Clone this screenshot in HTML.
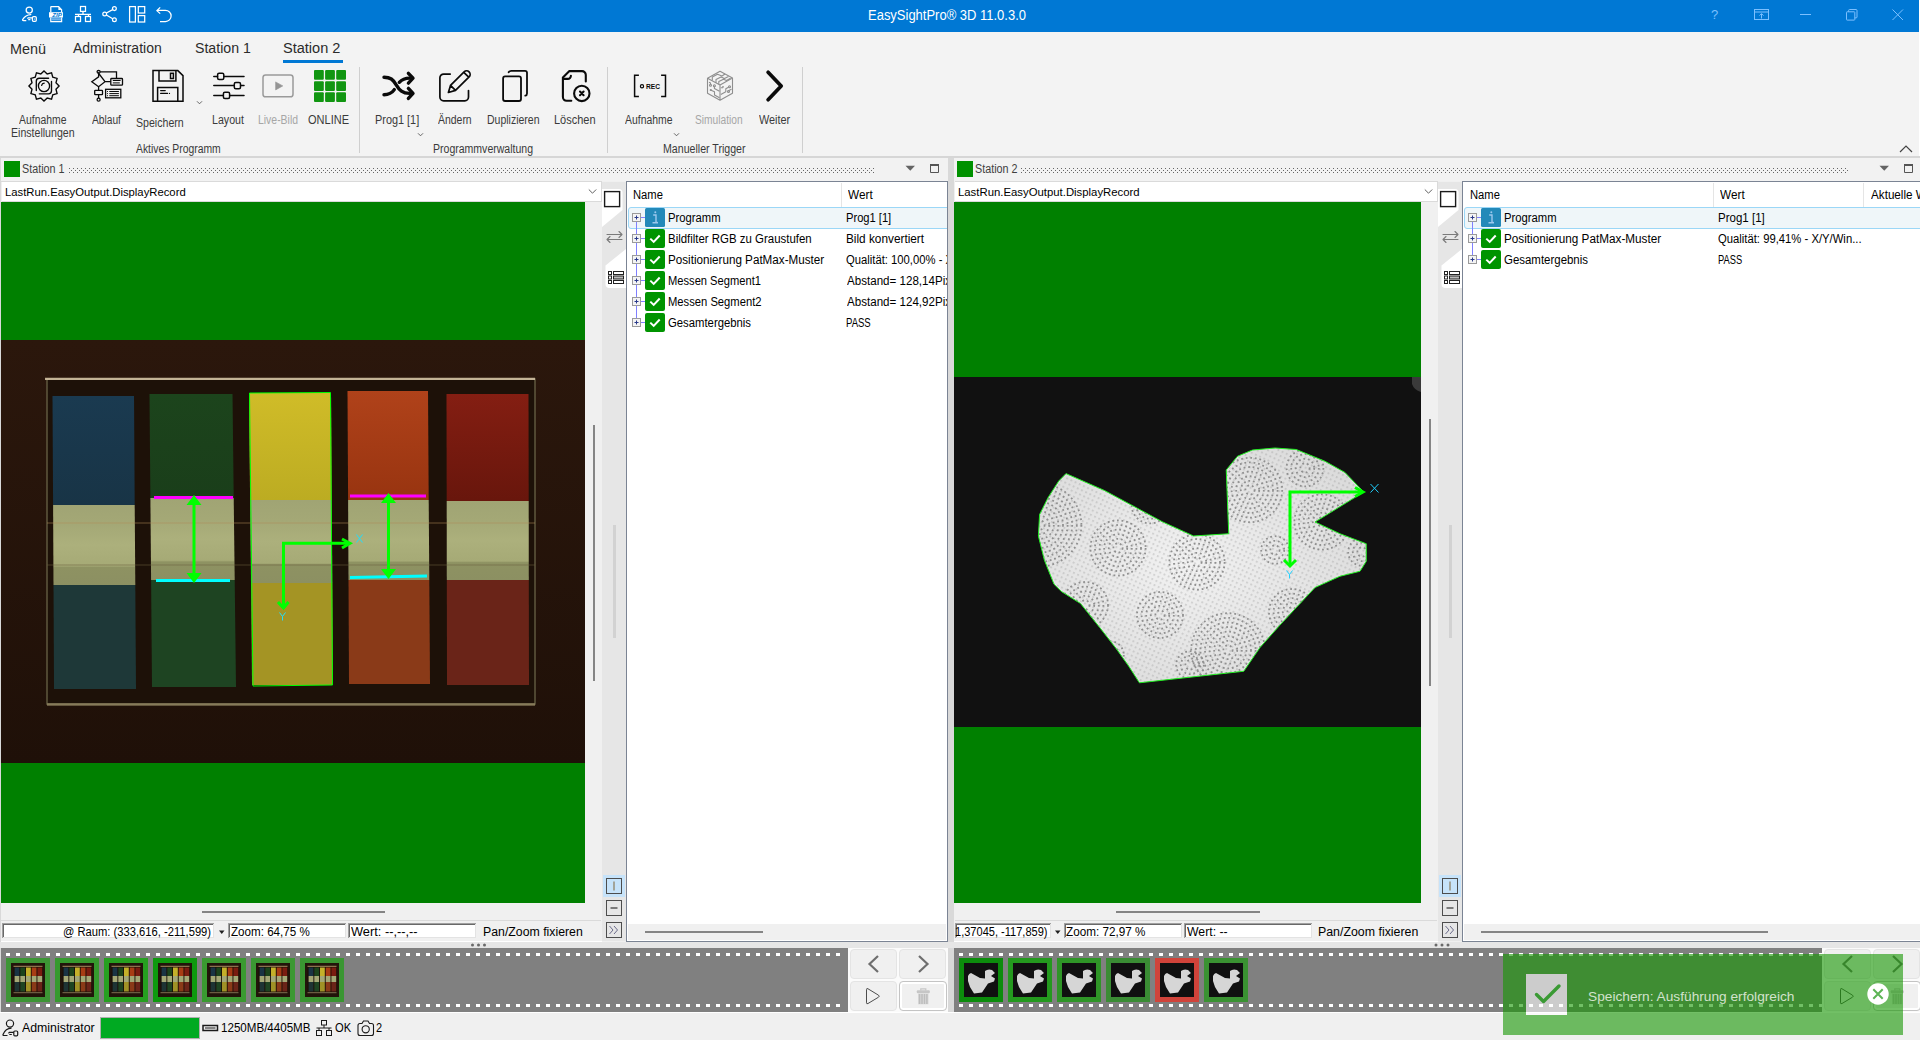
<!DOCTYPE html>
<html><head><meta charset="utf-8"><title>EasySightPro 3D</title>
<style>
html,body{margin:0;padding:0;width:1920px;height:1040px;overflow:hidden;background:#f0f0f0;font-family:"Liberation Sans",sans-serif;}
.a{position:absolute;display:block;}
.t{position:absolute;white-space:pre;transform-origin:0 0;font-family:"Liberation Sans",sans-serif;}
</style></head><body>
<div class="a" style="left:0px;top:0px;width:1920px;height:32px;background:#0078d4;"></div>
<svg class="a" style="left:18px;top:2px;" width="48" height="24" viewBox="0 0 48 24"><circle cx="11.25" cy="8.1" r="3.1" fill="none" stroke="#ffffff" stroke-width="1.25"/><path d="M12.8,12.6 Q7.6,12.8 4.6,17.7 Q4.4,18.7 5.5,18.7 H7.8" fill="none" stroke="#ffffff" stroke-width="1.25" stroke-linecap="round"/><path d="M9.4,16.6 L10.2,15.8 H14.4 M10.2,17.6 H12.4" fill="none" stroke="#ffffff" stroke-width="1.25"/><rect x="14.4" y="14.6" width="3.9" height="4.7" rx="1.1" fill="none" stroke="#ffffff" stroke-width="1.25"/><circle cx="16.4" cy="17" r="0.6" fill="#ffffff"/></svg>
<svg class="a" style="left:18px;top:2px;" width="48" height="24" viewBox="0 0 48 24"><path d="M32.8,10.3 V5 Q32.8,4.6 33.3,4.6 H40.6 L43.6,7.8 V10.3 M32.8,15.4 V19.5 H43.6 V15.4" fill="none" stroke="#ffffff" stroke-width="1.25"/><path d="M40.4,4.8 V8.1 H43.4 Z" fill="#ffffff"/><rect x="31" y="10.2" width="14" height="5.3" fill="#ffffff"/><rect x="33.2" y="16.2" width="10" height="2.2" fill="#6fb1ea"/><text x="34.2" y="14.9" font-family="Liberation Sans" font-weight="bold" font-style="italic" font-size="5.6" fill="#0078d4" textLength="9.6" lengthAdjust="spacingAndGlyphs">ZIP</text></svg>
<svg class="a" style="left:70px;top:2px;" width="48" height="24" viewBox="0 0 48 24"><rect x="10.5" y="4.5" width="5" height="4.9" fill="none" stroke="#ffffff" stroke-width="1.25"/><path d="M13,9.4 V12.4 M5,12.4 H21 M8.5,12.4 V14 M18.5,12.4 V14" fill="none" stroke="#ffffff" stroke-width="1.25"/><rect x="5.5" y="14.5" width="5" height="5" fill="none" stroke="#ffffff" stroke-width="1.25"/><rect x="15.5" y="14.5" width="5" height="5" fill="none" stroke="#ffffff" stroke-width="1.25"/><circle cx="44.4" cy="6.6" r="1.9" fill="none" stroke="#ffffff" stroke-width="1.25"/><circle cx="34.7" cy="12" r="1.9" fill="none" stroke="#ffffff" stroke-width="1.25"/><circle cx="44.4" cy="17.8" r="1.9" fill="none" stroke="#ffffff" stroke-width="1.25"/><path d="M36.4,11 L42.7,7.6 M36.4,13 L42.7,16.8" fill="none" stroke="#ffffff" stroke-width="1.25"/></svg>
<svg class="a" style="left:125px;top:2px;" width="48" height="24" viewBox="0 0 48 24"><rect x="4.6" y="4.6" width="5.8" height="15.4" fill="none" stroke="#ffffff" stroke-width="1.25" stroke-width="1.3"/><rect x="13.3" y="4.6" width="6.4" height="6.4" fill="none" stroke="#ffffff" stroke-width="1.25" stroke-width="1.3"/><rect x="13.3" y="13.6" width="6.4" height="6.4" fill="none" stroke="#ffffff" stroke-width="1.25" stroke-width="1.3"/><path d="M35,19.5 H40.5 A5.6,5.6 0 0 0 40.5,8.3 H32.5 M35.2,5.4 L31.8,8.6 L35.2,11.6" fill="none" stroke="#ffffff" stroke-width="1.25" stroke-width="1.3" stroke-linejoin="round"/></svg>
<svg class="a" style="left:1711px;top:8px;" width="12" height="14" viewBox="0 0 12 14"><text x="0" y="11" font-family="Liberation Sans" font-size="13" fill="#7cc0ff">?</text></svg>
<svg class="a" style="left:1754px;top:9px;" width="16" height="12" viewBox="0 0 16 12"><rect x="0.5" y="0.5" width="14" height="10" fill="none" stroke="#7cc0ff" stroke-width="1"/><path d="M0.5,3 H14.5 M7.5,9.5 V4.8 M5.5,6.6 L7.5,4.6 L9.5,6.6" fill="none" stroke="#7cc0ff" stroke-width="1"/></svg>
<svg class="a" style="left:1800px;top:14px;" width="12" height="2" viewBox="0 0 12 2"><path d="M0,0.5 H11" stroke="#7cc0ff" stroke-width="1"/></svg>
<svg class="a" style="left:1846px;top:9px;" width="12" height="12" viewBox="0 0 12 12"><rect x="0.5" y="2.8" width="8.3" height="8.3" rx="0.6" fill="none" stroke="#7cc0ff" stroke-width="1"/><path d="M2.6,2.8 V1.6 Q2.6,0.5 3.6,0.5 H10 Q11,0.5 11,1.5 V8 Q11,8.9 10,8.9 H8.8" fill="none" stroke="#7cc0ff" stroke-width="1"/></svg>
<svg class="a" style="left:1892px;top:9px;" width="12" height="12" viewBox="0 0 12 12"><path d="M0.5,0.5 L11,11 M11,0.5 L0.5,11" stroke="#7cc0ff" stroke-width="1"/></svg>
<div class="t" style="left:868.46px;top:8.33px;font-size:14px;line-height:15.638px;color:#ffffff;transform:scaleX(0.9273);">EasySightPro® 3D 11.0.3.0</div>
<div class="a" style="left:0px;top:32px;width:1920px;height:124px;background:#f3f3f3;"></div>
<div class="a" style="left:1919px;top:0px;width:1px;height:156px;background:#ffffff;"></div>
<div class="a" style="left:0px;top:156px;width:1920px;height:2px;background:#d6d6d6;"></div>
<div class="t" style="left:10.35px;top:41.83px;font-size:14px;line-height:15.638px;color:#2b2b2b;transform:scaleX(1.0291);">Menü</div>
<div class="t" style="left:73.00px;top:41.33px;font-size:14px;line-height:15.638px;color:#2b2b2b;">Administration</div>
<div class="t" style="left:194.86px;top:41.33px;font-size:14px;line-height:15.638px;color:#2b2b2b;transform:scaleX(1.0098);">Station 1</div>
<div class="t" style="left:283.35px;top:41.33px;font-size:14px;line-height:15.638px;color:#2b2b2b;transform:scaleX(1.0390);">Station 2</div>
<div class="a" style="left:283px;top:60px;width:60px;height:3px;background:#0078d4;"></div>
<div class="t" style="left:19.00px;top:114.14px;font-size:12px;line-height:13.404px;color:#3a3a3a;transform:scaleX(0.8675);">Aufnahme</div>
<div class="t" style="left:11.15px;top:127.14px;font-size:12px;line-height:13.404px;color:#3a3a3a;transform:scaleX(0.8817);">Einstellungen</div>
<div class="t" style="left:92.00px;top:114.14px;font-size:12px;line-height:13.404px;color:#3a3a3a;transform:scaleX(0.8509);">Ablauf</div>
<div class="t" style="left:136.02px;top:117.14px;font-size:12px;line-height:13.404px;color:#3a3a3a;transform:scaleX(0.8827);">Speichern</div>
<div class="t" style="left:212.15px;top:114.14px;font-size:12px;line-height:13.404px;color:#3a3a3a;transform:scaleX(0.8862);">Layout</div>
<div class="t" style="left:257.67px;top:114.14px;font-size:12px;line-height:13.404px;color:#a6a6a6;transform:scaleX(0.8695);">Live-Bild</div>
<div class="t" style="left:308.00px;top:114.14px;font-size:12px;line-height:13.404px;color:#3a3a3a;transform:scaleX(0.9170);">ONLINE</div>
<div class="t" style="left:375.13px;top:114.14px;font-size:12px;line-height:13.404px;color:#3a3a3a;transform:scaleX(0.9070);">Prog1 [1]</div>
<div class="t" style="left:438.00px;top:114.14px;font-size:12px;line-height:13.404px;color:#3a3a3a;transform:scaleX(0.8703);">Ändern</div>
<div class="t" style="left:487.16px;top:114.14px;font-size:12px;line-height:13.404px;color:#3a3a3a;transform:scaleX(0.8754);">Duplizieren</div>
<div class="t" style="left:554.12px;top:114.14px;font-size:12px;line-height:13.404px;color:#3a3a3a;transform:scaleX(0.9170);">Löschen</div>
<div class="t" style="left:625.00px;top:114.14px;font-size:12px;line-height:13.404px;color:#3a3a3a;transform:scaleX(0.8675);">Aufnahme</div>
<div class="t" style="left:695.04px;top:114.14px;font-size:12px;line-height:13.404px;color:#a6a6a6;transform:scaleX(0.8498);">Simulation</div>
<div class="t" style="left:758.95px;top:114.14px;font-size:12px;line-height:13.404px;color:#3a3a3a;transform:scaleX(0.9064);">Weiter</div>
<div class="t" style="left:136.00px;top:142.64px;font-size:12px;line-height:13.404px;color:#3a3a3a;transform:scaleX(0.8637);">Aktives Programm</div>
<div class="t" style="left:433.16px;top:142.64px;font-size:12px;line-height:13.404px;color:#3a3a3a;transform:scaleX(0.8770);">Programmverwaltung</div>
<div class="t" style="left:663.15px;top:142.64px;font-size:12px;line-height:13.404px;color:#3a3a3a;transform:scaleX(0.8838);">Manueller Trigger</div>
<svg class="a" style="left:24px;top:66px;" width="40" height="40" viewBox="0 0 40 40"><polygon points="20.00,4.90 23.21,8.02 27.55,6.92 28.77,11.23 33.08,12.45 31.98,16.79 35.10,20.00 31.98,23.21 33.08,27.55 28.77,28.77 27.55,33.08 23.21,31.98 20.00,35.10 16.79,31.98 12.45,33.08 11.23,28.77 6.92,27.55 8.02,23.21 4.90,20.00 8.02,16.79 6.92,12.45 11.23,11.23 12.45,6.92 16.79,8.02" fill="none" stroke="#0a0a0a" stroke-width="1.35" stroke-linejoin="miter"/><path d="M24.6,12.2 H15.3 A3,3 0 0 0 12.3,15.2 V24.6 M27.5,15.4 V24.8 A3,3 0 0 1 24.5,27.8 H15.3" fill="none" stroke="#0a0a0a" stroke-width="1.35" stroke-linecap="round"/><circle cx="20" cy="20" r="5.6" fill="none" stroke="#0a0a0a" stroke-width="1.35"/><path d="M17.6,19.5 A3,3 0 0 1 20.2,17.2" fill="none" stroke="#0a0a0a" stroke-width="1.2" stroke-linecap="round"/></svg>
<svg class="a" style="left:88px;top:66px;" width="40" height="40" viewBox="0 0 40 40"><circle cx="10.6" cy="5.8" r="1.5" fill="none" stroke="#0a0a0a" stroke-width="1.3"/><path d="M12.1,5.8 H28.5 V12.5 M10.6,7.3 V10.8 L3.8,15.7 L10.6,20.7 L17,15.7 Z M17,15.7 H22.8 M10.6,20.7 V24.3 M10.6,28.6 V32.2" fill="none" stroke="#0a0a0a" stroke-width="1.3"/><rect x="22.8" y="12.5" width="11.7" height="6.7" rx="0.8" fill="none" stroke="#0a0a0a" stroke-width="1.3"/><path d="M24.8,14.5 H32.6 M24.8,16.9 H31.8" fill="none" stroke="#0a0a0a" stroke-width="1"/><rect x="6.7" y="24.3" width="7.8" height="4.3" rx="0.6" fill="none" stroke="#0a0a0a" stroke-width="1.3"/><circle cx="10.6" cy="33.7" r="1.5" fill="none" stroke="#0a0a0a" stroke-width="1.3"/><rect x="17.6" y="23.3" width="15.2" height="8.5" fill="none" stroke="#0a0a0a" stroke-width="1.3"/><path d="M21.3,25.5 H30.9 M21.3,27.6 H30.9 M21.3,29.7 H30.9" fill="none" stroke="#0a0a0a" stroke-width="1"/><path d="M19.1,25.5 h0.9 M19.1,27.6 h0.9 M19.1,29.7 h0.9" fill="none" stroke="#0a0a0a" stroke-width="1"/></svg>
<svg class="a" style="left:148px;top:66px;" width="40" height="40" viewBox="0 0 40 40"><path d="M5,4.6 H29.8 L35,9.6 V35.2 H5 Z" fill="none" stroke="#0a0a0a" stroke-width="1.5" stroke-linejoin="miter"/><path d="M11,4.6 V15 H27.9 V4.6" fill="none" stroke="#0a0a0a" stroke-width="1.5"/><rect x="22.5" y="7.3" width="2.9" height="5.2" fill="none" stroke="#0a0a0a" stroke-width="1.5" stroke-width="1.3"/><path d="M9.6,35.2 V21.5 H29.8 V35.2" fill="none" stroke="#0a0a0a" stroke-width="1.5"/><path d="M12.6,24.6 H17.3 M12.6,27.4 H19.6" fill="none" stroke="#0a0a0a" stroke-width="1.1" stroke-linecap="round"/><circle cx="21.5" cy="27.4" r="0.6" fill="#0a0a0a"/></svg>
<svg class="a" style="left:208px;top:66px;" width="40" height="40" viewBox="0 0 40 40"><path d="M5.8,10.4 H9.5 M16,10.4 H36 M5.8,19.6 H26.2 M32.6,19.6 H36 M5.8,29.4 H15.3 M21.7,29.4 H36" fill="none" stroke="#0a0a0a" stroke-width="1.5" stroke-linecap="round"/><rect x="9.6" y="7.300000000000001" width="6.2" height="6.2" rx="1.5" fill="none" stroke="#0a0a0a" stroke-width="1.5"/><rect x="26.299999999999997" y="16.5" width="6.2" height="6.2" rx="1.5" fill="none" stroke="#0a0a0a" stroke-width="1.5"/><rect x="15.4" y="26.299999999999997" width="6.2" height="6.2" rx="1.5" fill="none" stroke="#0a0a0a" stroke-width="1.5"/></svg>
<svg class="a" style="left:258px;top:66px;" width="40" height="40" viewBox="0 0 40 40"><rect x="5" y="9" width="30" height="21.8" rx="2.6" fill="none" stroke="#9a9a9a" stroke-width="1.5"/><path d="M17.6,15.9 L24.8,19.9 L17.6,23.9 Z" fill="#959595" stroke="#959595" stroke-width="0.6" stroke-linejoin="round"/></svg>
<svg class="a" style="left:310px;top:66px;" width="40" height="40" viewBox="0 0 40 40"><rect x="4" y="4" width="9.8" height="9.7" rx="1" fill="#119611"/><rect x="15.1" y="4" width="9.8" height="9.7" rx="1" fill="#119611"/><rect x="26.2" y="4" width="9.8" height="9.7" rx="1" fill="#119611"/><rect x="4" y="15.2" width="9.8" height="9.7" rx="1" fill="#119611"/><rect x="15.1" y="15.2" width="9.8" height="9.7" rx="1" fill="#119611"/><rect x="26.2" y="15.2" width="9.8" height="9.7" rx="1" fill="#119611"/><rect x="4" y="26.2" width="9.8" height="9.7" rx="1" fill="#119611"/><rect x="15.1" y="26.2" width="9.8" height="9.7" rx="1" fill="#119611"/><rect x="26.2" y="26.2" width="9.8" height="9.7" rx="1" fill="#119611"/></svg>
<svg class="a" style="left:378px;top:66px;" width="40" height="40" viewBox="0 0 40 40"><path d="M6,11.2 C12.5,11.2 15,13.5 18.2,18.8 C21.4,24.2 24.5,27.4 31.5,27.4" fill="none" stroke="#0a0a0a" stroke-width="3.4" stroke-linecap="round" stroke-linejoin="round"/><path d="M6,28.7 C10.5,28.7 13.6,27.5 16.3,23.6" fill="none" stroke="#0a0a0a" stroke-width="3.4" stroke-linecap="round" stroke-linejoin="round" stroke-linecap="butt"/><path d="M21.3,16.3 C24,13.4 27,12.1 31.5,12.1" fill="none" stroke="#0a0a0a" stroke-width="3.4" stroke-linecap="round" stroke-linejoin="round" stroke-linecap="butt"/><path d="M30.4,7.3 L35,12.2 L30.4,17.1 M30.4,22.4 L35,27.4 L30.4,32.4" fill="none" stroke="#0a0a0a" stroke-width="3.4" stroke-linecap="round" stroke-linejoin="round"/></svg>
<svg class="a" style="left:436px;top:66px;" width="40" height="40" viewBox="0 0 40 40"><path d="M14.2,8.1 H7.6 A3.7,3.7 0 0 0 3.9,11.8 V31.1 A3.7,3.7 0 0 0 7.6,34.8 H28.8 A3.7,3.7 0 0 0 32.5,31.1 V24.6" fill="none" stroke="#0a0a0a" stroke-width="1.7" stroke-linecap="round" stroke-linejoin="round"/><path d="M12.4,26.5 L14.5,19.4 L28.1,5.9 A3.5,3.5 0 0 1 33.1,10.9 L19.5,24.4 Z M14.5,19.4 L19.5,24.4 M27.8,6.3 L32.7,11.2" fill="none" stroke="#0a0a0a" stroke-width="1.7" stroke-linecap="round" stroke-linejoin="round"/></svg>
<svg class="a" style="left:496px;top:66px;" width="40" height="40" viewBox="0 0 40 40"><rect x="7.1" y="10.4" width="17.9" height="24.6" rx="2" fill="none" stroke="#0a0a0a" stroke-width="1.8" stroke-linecap="round"/><path d="M12.6,6.3 Q13.6,4.8 15.2,4.8 H29 A2,2 0 0 1 31,6.8 V27.4 Q31,29.3 29.3,29.7" fill="none" stroke="#0a0a0a" stroke-width="1.8" stroke-linecap="round"/></svg>
<svg class="a" style="left:556px;top:66px;" width="40" height="40" viewBox="0 0 40 40"><path d="M15.3,34.8 H10.6 A3.8,3.8 0 0 1 6.9,31 V11.6 L13.4,5.1 H26 A3.8,3.8 0 0 1 29.8,8.9 V15.5" fill="none" stroke="#0a0a0a" stroke-width="2.1" stroke-linecap="round" stroke-linejoin="round"/><path d="M7,12.9 H11.8 A3.1,3.1 0 0 0 14.9,9.8" fill="none" stroke="#0a0a0a" stroke-width="2.1" stroke-linecap="round" stroke-linejoin="round"/><circle cx="25.8" cy="27.4" r="7.7" fill="none" stroke="#0a0a0a" stroke-width="2.1" stroke-linecap="round" stroke-linejoin="round"/><path d="M24,25.6 L27.6,29.2 M27.6,25.6 L24,29.2" fill="none" stroke="#0a0a0a" stroke-width="2.1" stroke-linecap="round"/></svg>
<svg class="a" style="left:630px;top:66px;" width="40" height="40" viewBox="0 0 40 40"><path d="M8.9,9.3 H4.6 V30.6 H8.9 M31.1,9.3 H35.5 V30.6 H31.1" fill="none" stroke="#0a0a0a" stroke-width="1.5"/><circle cx="12" cy="20.2" r="1.6" fill="none" stroke="#0a0a0a" stroke-width="1.2"/><text x="16" y="22.6" font-family="Liberation Sans" font-weight="bold" font-size="7" fill="#0a0a0a" textLength="14" lengthAdjust="spacingAndGlyphs">REC</text></svg>
<svg class="a" style="left:700px;top:66px;" width="40" height="40" viewBox="0 0 40 40"><path d="M20,5.2 L32.5,12 V27.3 L20,34.2 L7.5,27.3 V12.2 Z M7.5,12.2 L20,19 L32.5,12 M20,19 V34.2" fill="none" stroke="#8e8e8e" stroke-width="1.1" stroke-linejoin="round"/><path d="M12.3,14.6 L12.3,11 L17.5,8.3 L22,10 L25,8 M16,16.8 V13.5 L21,11 L24.5,12.5 L28.5,10.5 M18.8,18.2 V15.6 L23.5,13.2 L26.5,14.4 L30.5,12.2" fill="none" stroke="#8e8e8e" stroke-width="1.1" stroke-linejoin="round"/><path d="M9,16.2 L10.5,17 V18.3 M14.4,20.8 V22.5 L19.5,25.3 M10.5,24 L14.5,25.8 V29 L19.5,31.8 M20.8,21.8 H23 M20.8,28.5 L25.8,25.8 V22.8 L28.5,21.2 M27.8,25 L31.5,23.3" fill="none" stroke="#8e8e8e" stroke-width="1.1" stroke-linejoin="round"/><circle cx="10.5" cy="19.3" r="1" fill="none" stroke="#8e8e8e" stroke-width="1.1" stroke-linejoin="round"/><circle cx="14.4" cy="19.8" r="1" fill="none" stroke="#8e8e8e" stroke-width="1.1" stroke-linejoin="round"/><circle cx="29.5" cy="20.8" r="1" fill="none" stroke="#8e8e8e" stroke-width="1.1" stroke-linejoin="round"/><circle cx="28.5" cy="25.5" r="1" fill="none" stroke="#8e8e8e" stroke-width="1.1" stroke-linejoin="round"/><circle cx="10.8" cy="24" r="1.1" fill="#8e8e8e"/><circle cx="23" cy="20.8" r="0.9" fill="#8e8e8e"/></svg>
<svg class="a" style="left:756px;top:66px;" width="40" height="40" viewBox="0 0 40 40"><path d="M12.1,6.3 L25.2,20 L12.1,33.7" fill="none" stroke="#0a0a0a" stroke-width="3.7" stroke-linecap="round" stroke-linejoin="round"/></svg>
<svg class="a" style="left:196px;top:100px;" width="8" height="6" viewBox="0 0 8 6"><path d="M1,1.3 L3.5,3.8 L6,1.3" fill="none" stroke="#555" stroke-width="0.9"/></svg>
<svg class="a" style="left:417px;top:132px;" width="8" height="6" viewBox="0 0 8 6"><path d="M1,1.3 L3.5,3.8 L6,1.3" fill="none" stroke="#555" stroke-width="0.9"/></svg>
<svg class="a" style="left:673px;top:132px;" width="8" height="6" viewBox="0 0 8 6"><path d="M1,1.3 L3.5,3.8 L6,1.3" fill="none" stroke="#555" stroke-width="0.9"/></svg>
<svg class="a" style="left:1898px;top:143px;" width="16" height="12" viewBox="0 0 16 12"><path d="M2,9 L8,3 L14,9" fill="none" stroke="#444" stroke-width="1.2"/></svg>
<div class="a" style="left:359px;top:67px;width:1px;height:86px;background:#cfcfcf;"></div>
<div class="a" style="left:607px;top:67px;width:1px;height:86px;background:#cfcfcf;"></div>
<div class="a" style="left:802px;top:67px;width:1px;height:86px;background:#cfcfcf;"></div>
<div class="a" style="left:0px;top:158px;width:948px;height:23px;background:#f2f2f2;"></div>
<div class="a" style="left:4px;top:161px;width:16px;height:16px;background:#009100;"></div>
<div class="t" style="left:22.02px;top:162.69px;font-size:12.5px;line-height:13.963px;color:#404040;transform:scaleX(0.8612);">Station 1</div>
<svg class="a" style="left:69px;top:168px;" width="805" height="5" viewBox="0 0 805 5"><defs><pattern id="gp1" x="0" y="0" width="4" height="4" patternUnits="userSpaceOnUse"><rect x="0" y="0" width="1" height="1" fill="#666"/><rect x="2" y="2" width="1" height="1" fill="#666"/></pattern></defs><rect x="0" y="0" width="805" height="5" fill="url(#gp1)"/></svg>
<svg class="a" style="left:905px;top:165px;" width="11" height="7" viewBox="0 0 11 7"><path d="M0.5,0.8 H10 L5.25,5.8 Z" fill="#646464"/></svg>
<svg class="a" style="left:929px;top:163px;" width="11" height="11" viewBox="0 0 11 11"><path d="M1.5,2 V9.5 H9.5 V2" fill="none" stroke="#555" stroke-width="1"/><rect x="1" y="1" width="9" height="2" fill="#555"/></svg>
<div class="a" style="left:1px;top:181px;width:600px;height:760px;background:#f0f0f0;"></div>
<div class="a" style="left:1px;top:181px;width:601px;height:1px;background:#dadada;"></div>
<div class="a" style="left:2px;top:182px;width:599px;height:19px;background:#ffffff;"></div>
<div class="a" style="left:601px;top:181px;width:1px;height:21px;background:#dadada;"></div>
<div class="a" style="left:2px;top:201px;width:600px;height:1px;background:#dadada;"></div>
<div class="t" style="left:4.60px;top:185.59px;font-size:11.5px;line-height:12.845px;color:#000;transform:scaleX(0.9814);">LastRun.EasyOutput.DisplayRecord</div>
<svg class="a" style="left:588px;top:188px;" width="10" height="8" viewBox="0 0 10 8"><path d="M0.8,1.5 L4.5,5.2 L8.2,1.5" fill="none" stroke="#606060" stroke-width="1"/></svg>
<div class="a" style="left:1px;top:202px;width:584px;height:701px;background:#008000;"></div>
<div class="a" style="left:593px;top:425px;width:2px;height:256px;background:#858585;"></div>
<div class="a" style="left:202px;top:911px;width:183px;height:2px;background:#858585;"></div>
<div class="a" style="left:1px;top:920px;width:600px;height:1px;background:#dadada;"></div>
<div class="a" style="left:1px;top:941px;width:601px;height:1px;background:#ffffff;"></div>
<div class="a" style="left:2px;top:923px;width:212px;height:15px;background:#ffffff;"></div>
<div class="a" style="left:2px;top:923px;width:212px;height:1px;background:#a0a0a0;"></div>
<div class="a" style="left:2px;top:924px;width:211px;height:1px;background:#696969;"></div>
<div class="a" style="left:2px;top:923px;width:1px;height:15px;background:#a0a0a0;"></div>
<div class="a" style="left:3px;top:924px;width:1px;height:13px;background:#696969;"></div>
<div class="a" style="left:3px;top:937px;width:211px;height:1px;background:#e3e3e3;"></div>
<div class="a" style="left:213px;top:924px;width:1px;height:14px;background:#e3e3e3;"></div>
<div class="a" style="left:228px;top:923px;width:118px;height:15px;background:#ffffff;"></div>
<div class="a" style="left:228px;top:923px;width:118px;height:1px;background:#a0a0a0;"></div>
<div class="a" style="left:228px;top:924px;width:117px;height:1px;background:#696969;"></div>
<div class="a" style="left:228px;top:923px;width:1px;height:15px;background:#a0a0a0;"></div>
<div class="a" style="left:229px;top:924px;width:1px;height:13px;background:#696969;"></div>
<div class="a" style="left:229px;top:937px;width:117px;height:1px;background:#e3e3e3;"></div>
<div class="a" style="left:345px;top:924px;width:1px;height:14px;background:#e3e3e3;"></div>
<div class="a" style="left:348px;top:923px;width:128px;height:15px;background:#ffffff;"></div>
<div class="a" style="left:348px;top:923px;width:128px;height:1px;background:#a0a0a0;"></div>
<div class="a" style="left:348px;top:924px;width:127px;height:1px;background:#696969;"></div>
<div class="a" style="left:348px;top:923px;width:1px;height:15px;background:#a0a0a0;"></div>
<div class="a" style="left:349px;top:924px;width:1px;height:13px;background:#696969;"></div>
<div class="a" style="left:349px;top:937px;width:127px;height:1px;background:#e3e3e3;"></div>
<div class="a" style="left:475px;top:924px;width:1px;height:14px;background:#e3e3e3;"></div>
<div class="t" style="left:63.10px;top:925.64px;font-size:12px;line-height:13.404px;color:#000;transform:scaleX(0.9330);">@ Raum: (333,616, -211,599)</div>
<div class="t" style="left:230.65px;top:925.64px;font-size:12px;line-height:13.404px;color:#000;transform:scaleX(0.9680);">Zoom: 64,75 %</div>
<div class="t" style="left:350.94px;top:925.64px;font-size:12px;line-height:13.404px;color:#000;transform:scaleX(1.0669);">Wert: --,--,--</div>
<div class="t" style="left:482.52px;top:926.14px;font-size:12px;line-height:13.404px;color:#000;transform:scaleX(1.0247);">Pan/Zoom fixieren</div>
<svg class="a" style="left:219px;top:930px;" width="6" height="5" viewBox="0 0 6 5"><path d="M0,0.5 H5.5 L2.75,4 Z" fill="#202020"/></svg>
<div class="a" style="left:602px;top:182px;width:24px;height:759px;background:#e6e6e6;"></div>
<svg class="a" style="left:600px;top:186px;" width="28" height="106" viewBox="0 0 28 106"><path d="M2,3 H19 A3.5,3.5 0 0 1 22.5,6.5 V24 L2,41 Z" fill="#ffffff"/><path d="M26,63 L5.5,79.5 V98 A4,4 0 0 0 9.5,102 H26 Z" fill="#ffffff"/><rect x="4.6" y="5.6" width="15" height="15" fill="#ffffff" stroke="#1a1a1a" stroke-width="1.4"/><path d="M7,48.5 H22 M19,45.5 L22,48.5 M22,53.5 H7 M10,50.5 L7,53.5 M10,56.5 L7,53.5 M19,51.5 L22,48.5" fill="none" stroke="#7a7a7a" stroke-width="1.1" stroke-linecap="round"/><rect x="8.5" y="85.5" width="3" height="3" fill="none" stroke="#222" stroke-width="1"/><rect x="8.5" y="90" width="3" height="3" fill="none" stroke="#222" stroke-width="1"/><rect x="8.5" y="94.5" width="3" height="3" fill="none" stroke="#222" stroke-width="1"/><rect x="13.5" y="85.5" width="10" height="3" fill="none" stroke="#222" stroke-width="1"/><rect x="13.5" y="90" width="10" height="3" fill="#bbb" stroke="#222" stroke-width="1"/><rect x="13.5" y="94.5" width="10" height="3" fill="none" stroke="#222" stroke-width="1"/></svg>
<div class="a" style="left:613px;top:525px;width:3px;height:113px;background:#d2d2d2;"></div>
<div class="a" style="left:603px;top:875px;width:22px;height:22px;background:#c6e3fa;"></div>
<svg class="a" style="left:605px;top:877px;" width="18" height="62" viewBox="0 0 18 62"><rect x="1.5" y="1.5" width="15" height="15" fill="none" stroke="#4d4d4d" stroke-width="1"/><path d="M9,4.5 V13.5" stroke="#8a7a5a" stroke-width="1.2"/><rect x="1.5" y="23.5" width="15" height="15" fill="none" stroke="#4d4d4d" stroke-width="1"/><path d="M5.5,31 H12.5" stroke="#606060" stroke-width="1.6"/><rect x="1.5" y="45.5" width="15" height="15" fill="none" stroke="#4d4d4d" stroke-width="1"/><path d="M4.5,49 L8,53 L4.5,57 M9,49 L12.5,53 L9,57" fill="none" stroke="#6a6a8a" stroke-width="1"/></svg>
<div class="a" style="left:626px;top:181px;width:322px;height:761px;background:#7b8494;"></div>
<div class="a" style="left:627px;top:182px;width:320px;height:759px;background:#ffffff;"></div>
<div class="a" style="left:0;top:0;width:947px;height:1040px;overflow:hidden">
<div class="t" style="left:633.10px;top:189.14px;font-size:12px;line-height:13.404px;color:#000;transform:scaleX(0.9350);">Name</div>
<div class="a" style="left:841px;top:183px;width:1px;height:24px;background:#e5e5e5;"></div>
<div class="t" style="left:847.94px;top:189.14px;font-size:12px;line-height:13.404px;color:#000;transform:scaleX(0.9816);">Wert</div>
<div class="a" style="left:628px;top:207px;width:332px;height:22px;box-sizing:border-box;border:1px solid #9bd7f7;border-radius:3px;background:#eff6f9;"></div>
<div class="a" style="left:636px;top:222px;width:1px;height:96px;background:#8080ff;"></div>
<div class="a" style="left:641px;top:217px;width:4px;height:1px;background:#8080ff;"></div>
<svg class="a" style="left:631px;top:212px;" width="11" height="11" viewBox="0 0 11 11"><rect x="1.5" y="1.5" width="8" height="8" fill="#f4f4f4" stroke="#9a9a9a" stroke-width="1"/><path d="M3.5,5.5 H7.5 M5.5,3.5 V7.5" stroke="#2a3a8a" stroke-width="1"/></svg>
<svg class="a" style="left:645px;top:208px;" width="20" height="19" viewBox="0 0 20 19"><rect x="0" y="0" width="20" height="19" rx="1.5" fill="#2389b9"/><path d="M8.2,7 H11 V14.5 H12.5 M7.5,14.8 H13" fill="none" stroke="#9cc8ee" stroke-width="1.4"/><circle cx="10.3" cy="4.2" r="1" fill="#9cc8ee"/></svg>
<div class="t" style="left:667.80px;top:212.14px;font-size:12px;line-height:13.404px;color:#000;transform:scaleX(0.9392);">Programm</div>
<div class="t" style="left:845.61px;top:212.14px;font-size:12px;line-height:13.404px;color:#000;transform:scaleX(0.9283);">Prog1 [1]</div>
<div class="a" style="left:641px;top:238px;width:4px;height:1px;background:#8080ff;"></div>
<svg class="a" style="left:631px;top:233px;" width="11" height="11" viewBox="0 0 11 11"><rect x="1.5" y="1.5" width="8" height="8" fill="#f4f4f4" stroke="#9a9a9a" stroke-width="1"/><path d="M3.5,5.5 H7.5 M5.5,3.5 V7.5" stroke="#2a3a8a" stroke-width="1"/></svg>
<svg class="a" style="left:645px;top:229px;" width="20" height="19" viewBox="0 0 20 19"><rect x="0" y="0" width="20" height="19" rx="2" fill="#009400"/><path d="M5.3,9.6 L8.7,12.9 L14.7,6.5" fill="none" stroke="#ffffff" stroke-width="2"/></svg>
<div class="t" style="left:667.78px;top:233.14px;font-size:12px;line-height:13.404px;color:#000;transform:scaleX(0.9531);">Bildfilter RGB zu Graustufen</div>
<div class="t" style="left:845.56px;top:233.14px;font-size:12px;line-height:13.404px;color:#000;transform:scaleX(0.9834);">Bild konvertiert</div>
<div class="a" style="left:641px;top:259px;width:4px;height:1px;background:#8080ff;"></div>
<svg class="a" style="left:631px;top:254px;" width="11" height="11" viewBox="0 0 11 11"><rect x="1.5" y="1.5" width="8" height="8" fill="#f4f4f4" stroke="#9a9a9a" stroke-width="1"/><path d="M3.5,5.5 H7.5 M5.5,3.5 V7.5" stroke="#2a3a8a" stroke-width="1"/></svg>
<svg class="a" style="left:645px;top:250px;" width="20" height="19" viewBox="0 0 20 19"><rect x="0" y="0" width="20" height="19" rx="2" fill="#009400"/><path d="M5.3,9.6 L8.7,12.9 L14.7,6.5" fill="none" stroke="#ffffff" stroke-width="2"/></svg>
<div class="t" style="left:667.77px;top:254.14px;font-size:12px;line-height:13.404px;color:#000;transform:scaleX(0.9715);">Positionierung PatMax-Muster</div>
<div class="t" style="left:845.99px;top:254.14px;font-size:12px;line-height:13.404px;color:#000;transform:scaleX(0.9382);">Qualität: 100,00% - X/Y/Winkel</div>
<div class="a" style="left:641px;top:280px;width:4px;height:1px;background:#8080ff;"></div>
<svg class="a" style="left:631px;top:275px;" width="11" height="11" viewBox="0 0 11 11"><rect x="1.5" y="1.5" width="8" height="8" fill="#f4f4f4" stroke="#9a9a9a" stroke-width="1"/><path d="M3.5,5.5 H7.5 M5.5,3.5 V7.5" stroke="#2a3a8a" stroke-width="1"/></svg>
<svg class="a" style="left:645px;top:271px;" width="20" height="19" viewBox="0 0 20 19"><rect x="0" y="0" width="20" height="19" rx="2" fill="#009400"/><path d="M5.3,9.6 L8.7,12.9 L14.7,6.5" fill="none" stroke="#ffffff" stroke-width="2"/></svg>
<div class="t" style="left:667.81px;top:275.14px;font-size:12px;line-height:13.404px;color:#000;transform:scaleX(0.9287);">Messen Segment1</div>
<div class="t" style="left:846.50px;top:275.14px;font-size:12px;line-height:13.404px;color:#000;transform:scaleX(0.9661);">Abstand= 128,14Pixel</div>
<div class="a" style="left:641px;top:301px;width:4px;height:1px;background:#8080ff;"></div>
<svg class="a" style="left:631px;top:296px;" width="11" height="11" viewBox="0 0 11 11"><rect x="1.5" y="1.5" width="8" height="8" fill="#f4f4f4" stroke="#9a9a9a" stroke-width="1"/><path d="M3.5,5.5 H7.5 M5.5,3.5 V7.5" stroke="#2a3a8a" stroke-width="1"/></svg>
<svg class="a" style="left:645px;top:292px;" width="20" height="19" viewBox="0 0 20 19"><rect x="0" y="0" width="20" height="19" rx="2" fill="#009400"/><path d="M5.3,9.6 L8.7,12.9 L14.7,6.5" fill="none" stroke="#ffffff" stroke-width="2"/></svg>
<div class="t" style="left:667.80px;top:296.14px;font-size:12px;line-height:13.404px;color:#000;transform:scaleX(0.9344);">Messen Segment2</div>
<div class="t" style="left:846.50px;top:296.14px;font-size:12px;line-height:13.404px;color:#000;transform:scaleX(0.9661);">Abstand= 124,92Pixel</div>
<div class="a" style="left:641px;top:322px;width:4px;height:1px;background:#8080ff;"></div>
<svg class="a" style="left:631px;top:317px;" width="11" height="11" viewBox="0 0 11 11"><rect x="1.5" y="1.5" width="8" height="8" fill="#f4f4f4" stroke="#9a9a9a" stroke-width="1"/><path d="M3.5,5.5 H7.5 M5.5,3.5 V7.5" stroke="#2a3a8a" stroke-width="1"/></svg>
<svg class="a" style="left:645px;top:313px;" width="20" height="19" viewBox="0 0 20 19"><rect x="0" y="0" width="20" height="19" rx="2" fill="#009400"/><path d="M5.3,9.6 L8.7,12.9 L14.7,6.5" fill="none" stroke="#ffffff" stroke-width="2"/></svg>
<div class="t" style="left:668.13px;top:317.14px;font-size:12px;line-height:13.404px;color:#000;transform:scaleX(0.9425);">Gesamtergebnis</div>
<div class="t" style="left:845.74px;top:317.14px;font-size:12px;line-height:13.404px;color:#000;transform:scaleX(0.7945);">PASS</div>
</div>
<div class="a" style="left:628px;top:924px;width:318px;height:16px;background:#f0f0f0;"></div>
<div class="a" style="left:645px;top:931px;width:118px;height:2px;background:#858585;"></div>
<div class="a" style="left:954px;top:158px;width:966px;height:23px;background:#f2f2f2;"></div>
<div class="a" style="left:957px;top:161px;width:16px;height:16px;background:#009100;"></div>
<div class="t" style="left:975.01px;top:162.69px;font-size:12.5px;line-height:13.963px;color:#404040;transform:scaleX(0.8623);">Station 2</div>
<svg class="a" style="left:1021px;top:168px;" width="827" height="5" viewBox="0 0 827 5"><defs><pattern id="gp2" x="0" y="0" width="4" height="4" patternUnits="userSpaceOnUse"><rect x="0" y="0" width="1" height="1" fill="#666"/><rect x="2" y="2" width="1" height="1" fill="#666"/></pattern></defs><rect x="0" y="0" width="827" height="5" fill="url(#gp2)"/></svg>
<svg class="a" style="left:1879px;top:165px;" width="11" height="7" viewBox="0 0 11 7"><path d="M0.5,0.8 H10 L5.25,5.8 Z" fill="#646464"/></svg>
<svg class="a" style="left:1903px;top:163px;" width="11" height="11" viewBox="0 0 11 11"><path d="M1.5,2 V9.5 H9.5 V2" fill="none" stroke="#555" stroke-width="1"/><rect x="1" y="1" width="9" height="2" fill="#555"/></svg>
<div class="a" style="left:954px;top:181px;width:483px;height:760px;background:#f0f0f0;"></div>
<div class="a" style="left:955px;top:181px;width:483px;height:1px;background:#dadada;"></div>
<div class="a" style="left:955px;top:182px;width:482px;height:19px;background:#ffffff;"></div>
<div class="a" style="left:1437px;top:181px;width:1px;height:21px;background:#dadada;"></div>
<div class="a" style="left:955px;top:201px;width:483px;height:1px;background:#dadada;"></div>
<div class="t" style="left:958.09px;top:185.59px;font-size:11.5px;line-height:12.845px;color:#000;transform:scaleX(0.9869);">LastRun.EasyOutput.DisplayRecord</div>
<svg class="a" style="left:1424px;top:188px;" width="10" height="8" viewBox="0 0 10 8"><path d="M0.8,1.5 L4.5,5.2 L8.2,1.5" fill="none" stroke="#606060" stroke-width="1"/></svg>
<div class="a" style="left:954px;top:202px;width:467px;height:701px;background:#008000;"></div>
<div class="a" style="left:1429px;top:419px;width:2px;height:267px;background:#858585;"></div>
<div class="a" style="left:1116px;top:911px;width:144px;height:2px;background:#858585;"></div>
<div class="a" style="left:955px;top:920px;width:482px;height:1px;background:#dadada;"></div>
<div class="a" style="left:954px;top:941px;width:484px;height:1px;background:#ffffff;"></div>
<div class="a" style="left:955px;top:923px;width:96px;height:15px;background:#ffffff;"></div>
<div class="a" style="left:955px;top:923px;width:96px;height:1px;background:#a0a0a0;"></div>
<div class="a" style="left:955px;top:924px;width:95px;height:1px;background:#696969;"></div>
<div class="a" style="left:955px;top:923px;width:1px;height:15px;background:#a0a0a0;"></div>
<div class="a" style="left:956px;top:924px;width:1px;height:13px;background:#696969;"></div>
<div class="a" style="left:956px;top:937px;width:95px;height:1px;background:#e3e3e3;"></div>
<div class="a" style="left:1050px;top:924px;width:1px;height:14px;background:#e3e3e3;"></div>
<div class="a" style="left:1064px;top:923px;width:118px;height:15px;background:#ffffff;"></div>
<div class="a" style="left:1064px;top:923px;width:118px;height:1px;background:#a0a0a0;"></div>
<div class="a" style="left:1064px;top:924px;width:117px;height:1px;background:#696969;"></div>
<div class="a" style="left:1064px;top:923px;width:1px;height:15px;background:#a0a0a0;"></div>
<div class="a" style="left:1065px;top:924px;width:1px;height:13px;background:#696969;"></div>
<div class="a" style="left:1065px;top:937px;width:117px;height:1px;background:#e3e3e3;"></div>
<div class="a" style="left:1181px;top:924px;width:1px;height:14px;background:#e3e3e3;"></div>
<div class="a" style="left:1184px;top:923px;width:128px;height:15px;background:#ffffff;"></div>
<div class="a" style="left:1184px;top:923px;width:128px;height:1px;background:#a0a0a0;"></div>
<div class="a" style="left:1184px;top:924px;width:127px;height:1px;background:#696969;"></div>
<div class="a" style="left:1184px;top:923px;width:1px;height:15px;background:#a0a0a0;"></div>
<div class="a" style="left:1185px;top:924px;width:1px;height:13px;background:#696969;"></div>
<div class="a" style="left:1185px;top:937px;width:127px;height:1px;background:#e3e3e3;"></div>
<div class="a" style="left:1311px;top:924px;width:1px;height:14px;background:#e3e3e3;"></div>
<div class="t" style="left:955.17px;top:925.64px;font-size:12px;line-height:13.404px;color:#000;transform:scaleX(0.9203);">1,37045, -117,859)</div>
<div class="t" style="left:1066.15px;top:925.64px;font-size:12px;line-height:13.404px;color:#000;transform:scaleX(0.9742);">Zoom: 72,97 %</div>
<div class="t" style="left:1186.94px;top:925.64px;font-size:12px;line-height:13.404px;color:#000;transform:scaleX(1.0209);">Wert: --</div>
<div class="t" style="left:1318.01px;top:926.14px;font-size:12px;line-height:13.404px;color:#000;transform:scaleX(1.0299);">Pan/Zoom fixieren</div>
<svg class="a" style="left:1055px;top:930px;" width="6" height="5" viewBox="0 0 6 5"><path d="M0,0.5 H5.5 L2.75,4 Z" fill="#202020"/></svg>
<div class="a" style="left:1438px;top:182px;width:24px;height:759px;background:#e6e6e6;"></div>
<svg class="a" style="left:1436px;top:186px;" width="28" height="106" viewBox="0 0 28 106"><path d="M2,3 H19 A3.5,3.5 0 0 1 22.5,6.5 V24 L2,41 Z" fill="#ffffff"/><path d="M26,63 L5.5,79.5 V98 A4,4 0 0 0 9.5,102 H26 Z" fill="#ffffff"/><rect x="4.6" y="5.6" width="15" height="15" fill="#ffffff" stroke="#1a1a1a" stroke-width="1.4"/><path d="M7,48.5 H22 M19,45.5 L22,48.5 M22,53.5 H7 M10,50.5 L7,53.5 M10,56.5 L7,53.5 M19,51.5 L22,48.5" fill="none" stroke="#7a7a7a" stroke-width="1.1" stroke-linecap="round"/><rect x="8.5" y="85.5" width="3" height="3" fill="none" stroke="#222" stroke-width="1"/><rect x="8.5" y="90" width="3" height="3" fill="none" stroke="#222" stroke-width="1"/><rect x="8.5" y="94.5" width="3" height="3" fill="none" stroke="#222" stroke-width="1"/><rect x="13.5" y="85.5" width="10" height="3" fill="none" stroke="#222" stroke-width="1"/><rect x="13.5" y="90" width="10" height="3" fill="#bbb" stroke="#222" stroke-width="1"/><rect x="13.5" y="94.5" width="10" height="3" fill="none" stroke="#222" stroke-width="1"/></svg>
<div class="a" style="left:1449px;top:525px;width:3px;height:113px;background:#d2d2d2;"></div>
<div class="a" style="left:1439px;top:875px;width:22px;height:22px;background:#c6e3fa;"></div>
<svg class="a" style="left:1441px;top:877px;" width="18" height="62" viewBox="0 0 18 62"><rect x="1.5" y="1.5" width="15" height="15" fill="none" stroke="#4d4d4d" stroke-width="1"/><path d="M9,4.5 V13.5" stroke="#8a7a5a" stroke-width="1.2"/><rect x="1.5" y="23.5" width="15" height="15" fill="none" stroke="#4d4d4d" stroke-width="1"/><path d="M5.5,31 H12.5" stroke="#606060" stroke-width="1.6"/><rect x="1.5" y="45.5" width="15" height="15" fill="none" stroke="#4d4d4d" stroke-width="1"/><path d="M4.5,49 L8,53 L4.5,57 M9,49 L12.5,53 L9,57" fill="none" stroke="#6a6a8a" stroke-width="1"/></svg>
<div class="a" style="left:1462px;top:181px;width:458px;height:761px;background:#7b8494;"></div>
<div class="a" style="left:1463px;top:182px;width:457px;height:759px;background:#ffffff;"></div>
<div class="a" style="left:0;top:0;width:1920px;height:1040px;overflow:hidden">
<div class="t" style="left:1469.60px;top:189.14px;font-size:12px;line-height:13.404px;color:#000;transform:scaleX(0.9350);">Name</div>
<div class="a" style="left:1713px;top:183px;width:1px;height:24px;background:#e5e5e5;"></div>
<div class="a" style="left:1863px;top:183px;width:1px;height:24px;background:#e5e5e5;"></div>
<div class="t" style="left:1719.94px;top:189.14px;font-size:12px;line-height:13.404px;color:#000;transform:scaleX(0.9816);">Wert</div>
<div class="t" style="left:1870.50px;top:189.14px;font-size:12px;line-height:13.404px;color:#000;transform:scaleX(0.9734);">Aktuelle Werte</div>
<div class="a" style="left:1464px;top:207px;width:476px;height:22px;box-sizing:border-box;border:1px solid #9bd7f7;border-radius:3px;background:#eff6f9;"></div>
<div class="a" style="left:1472px;top:222px;width:1px;height:33px;background:#8080ff;"></div>
<div class="a" style="left:1477px;top:217px;width:4px;height:1px;background:#8080ff;"></div>
<svg class="a" style="left:1467px;top:212px;" width="11" height="11" viewBox="0 0 11 11"><rect x="1.5" y="1.5" width="8" height="8" fill="#f4f4f4" stroke="#9a9a9a" stroke-width="1"/><path d="M3.5,5.5 H7.5 M5.5,3.5 V7.5" stroke="#2a3a8a" stroke-width="1"/></svg>
<svg class="a" style="left:1481px;top:208px;" width="20" height="19" viewBox="0 0 20 19"><rect x="0" y="0" width="20" height="19" rx="1.5" fill="#2389b9"/><path d="M8.2,7 H11 V14.5 H12.5 M7.5,14.8 H13" fill="none" stroke="#9cc8ee" stroke-width="1.4"/><circle cx="10.3" cy="4.2" r="1" fill="#9cc8ee"/></svg>
<div class="t" style="left:1503.80px;top:212.14px;font-size:12px;line-height:13.404px;color:#000;transform:scaleX(0.9392);">Programm</div>
<div class="t" style="left:1718.08px;top:212.14px;font-size:12px;line-height:13.404px;color:#000;transform:scaleX(0.9603);">Prog1 [1]</div>
<div class="a" style="left:1477px;top:238px;width:4px;height:1px;background:#8080ff;"></div>
<svg class="a" style="left:1467px;top:233px;" width="11" height="11" viewBox="0 0 11 11"><rect x="1.5" y="1.5" width="8" height="8" fill="#f4f4f4" stroke="#9a9a9a" stroke-width="1"/><path d="M3.5,5.5 H7.5 M5.5,3.5 V7.5" stroke="#2a3a8a" stroke-width="1"/></svg>
<svg class="a" style="left:1481px;top:229px;" width="20" height="19" viewBox="0 0 20 19"><rect x="0" y="0" width="20" height="19" rx="2" fill="#009400"/><path d="M5.3,9.6 L8.7,12.9 L14.7,6.5" fill="none" stroke="#ffffff" stroke-width="2"/></svg>
<div class="t" style="left:1503.76px;top:233.14px;font-size:12px;line-height:13.404px;color:#000;transform:scaleX(0.9778);">Positionierung PatMax-Muster</div>
<div class="t" style="left:1718.49px;top:233.14px;font-size:12px;line-height:13.404px;color:#000;transform:scaleX(0.9399);">Qualität: 99,41% - X/Y/Win...</div>
<div class="a" style="left:1477px;top:259px;width:4px;height:1px;background:#8080ff;"></div>
<svg class="a" style="left:1467px;top:254px;" width="11" height="11" viewBox="0 0 11 11"><rect x="1.5" y="1.5" width="8" height="8" fill="#f4f4f4" stroke="#9a9a9a" stroke-width="1"/><path d="M3.5,5.5 H7.5 M5.5,3.5 V7.5" stroke="#2a3a8a" stroke-width="1"/></svg>
<svg class="a" style="left:1481px;top:250px;" width="20" height="19" viewBox="0 0 20 19"><rect x="0" y="0" width="20" height="19" rx="2" fill="#009400"/><path d="M5.3,9.6 L8.7,12.9 L14.7,6.5" fill="none" stroke="#ffffff" stroke-width="2"/></svg>
<div class="t" style="left:1504.13px;top:254.14px;font-size:12px;line-height:13.404px;color:#000;transform:scaleX(0.9540);">Gesamtergebnis</div>
<div class="t" style="left:1718.25px;top:254.14px;font-size:12px;line-height:13.404px;color:#000;transform:scaleX(0.7776);">PASS</div>
</div>
<div class="a" style="left:1464px;top:924px;width:456px;height:16px;background:#f0f0f0;"></div>
<div class="a" style="left:1481px;top:931px;width:287px;height:2px;background:#858585;"></div>
<svg class="a" style="left:1px;top:340px" width="584" height="423" viewBox="1 340 584 423"><defs><linearGradient id="bg1" x1="0" y1="0" x2="0" y2="1"><stop offset="0" stop-color="#2b170c"/><stop offset="1" stop-color="#1f1008"/></linearGradient><linearGradient id="band" x1="0" y1="0" x2="0" y2="1"><stop offset="0" stop-color="#a0a474"/><stop offset="0.25" stop-color="#a4a876"/><stop offset="0.5" stop-color="#acb07c"/><stop offset="0.76" stop-color="#a6aa76"/><stop offset="0.78" stop-color="#8e9262"/><stop offset="1" stop-color="#8c9062"/></linearGradient></defs><rect x="1" y="340" width="584" height="423" fill="url(#bg1)"/><path d="M47,379 H535 V704 H47 Z" fill="#1d1108" stroke="#6a6448" stroke-width="1.6" stroke-opacity="0.8"/><path d="M45,378.8 H535" stroke="#d8c8a8" stroke-width="2.2" stroke-opacity="0.85"/><path d="M47,704.5 H535" stroke="#9a8e68" stroke-width="2.4" stroke-opacity="0.75"/><linearGradient id="t52" x1="0" y1="0" x2="0" y2="1"><stop offset="0" stop-color="#1a3a50"/><stop offset="1" stop-color="#183446"/></linearGradient><path d="M52.5,396 H134 L134.7,505 H53.1 Z" fill="url(#t52)"/><path d="M53.1,505 H134.7 L135.3,585 H53.5 Z" fill="url(#band)"/><path d="M53.5,585 H135.3 L136,689 H54 Z" fill="#1e3838"/><linearGradient id="t149" x1="0" y1="0" x2="0" y2="1"><stop offset="0" stop-color="#1c441c"/><stop offset="1" stop-color="#1a3e1a"/></linearGradient><path d="M149.5,394 H232.5 L233.7,498 H150.4 Z" fill="url(#t149)"/><path d="M150.4,498 H233.7 L234.7,580 H151.1 Z" fill="url(#band)"/><path d="M151.1,580 H234.7 L236,687 H152 Z" fill="#1e4422"/><linearGradient id="t249" x1="0" y1="0" x2="0" y2="1"><stop offset="0" stop-color="#d0bc28"/><stop offset="1" stop-color="#bcac22"/></linearGradient><path d="M249,393 H331 L331.7,500 H250.1 Z" fill="url(#t249)"/><path d="M250.1,500 H331.7 L332.3,583 H251.0 Z" fill="url(#band)"/><path d="M251.0,583 H332.3 L333,685 H252 Z" fill="#a49424"/><linearGradient id="t347" x1="0" y1="0" x2="0" y2="1"><stop offset="0" stop-color="#b0421a"/><stop offset="1" stop-color="#983410"/></linearGradient><path d="M347.5,391 H428 L428.7,500 H348.1 Z" fill="url(#t347)"/><path d="M348.1,500 H428.7 L429.3,580 H348.5 Z" fill="url(#band)"/><path d="M348.5,580 H429.3 L430,684 H349 Z" fill="#8a3a18"/><linearGradient id="t446" x1="0" y1="0" x2="0" y2="1"><stop offset="0" stop-color="#841e12"/><stop offset="1" stop-color="#68160c"/></linearGradient><path d="M446.5,394 H528.5 L528.7,501 H446.7 Z" fill="url(#t446)"/><path d="M446.7,501 H528.7 L528.8,580 H446.8 Z" fill="url(#band)"/><path d="M446.8,580 H528.8 L529,685 H447 Z" fill="#6a2418"/><path d="M47,523 H535" stroke="#b08a5a" stroke-width="1" stroke-opacity="0.55"/><path d="M47,565 H535" stroke="#6a6040" stroke-width="1" stroke-opacity="0.55"/><path d="M249.5,393 L330.5,392.5 L332.5,685 L253,686 Z" fill="none" stroke="#00ff00" stroke-width="1"/><path d="M154,497.5 H233 M350,496 H426" stroke="#ff00ff" stroke-width="3"/><path d="M156,580.5 H230 M350,577.5 L427,576" stroke="#00ffff" stroke-width="3"/><path d="M194,503 V575" stroke="#00ff00" stroke-width="3"/><path d="M186.5,505 L194,495 L201.5,505 Z M186.5,573 L194,583 L201.5,573 Z" fill="#00ff00"/><path d="M388.5,501 V571" stroke="#00ff00" stroke-width="3"/><path d="M381.0,503 L388.5,493 L396.0,503 Z M381.0,569 L388.5,579 L396.0,569 Z" fill="#00ff00"/><path d="M283.5,607 V543.3 H349" fill="none" stroke="#00ff00" stroke-width="3"/><path d="M342,539 L350,543.3 L342,548 M278,602 L283.5,608 L288.5,602" fill="none" stroke="#00ff00" stroke-width="3" stroke-linejoin="miter"/><path d="M356.5,534.5 L362.5,542.5 M362.5,534.5 L356.5,542.5 M279.5,612.5 L282.5,616.5 L285.5,612.5 M282.5,616.5 V620.5" fill="none" stroke="#1fdfff" stroke-width="1"/></svg>
<svg class="a" style="left:954px;top:377px" width="467" height="350" viewBox="954 377 467 350"><defs><clipPath id="tw"><polygon points="1066,473.6 1058.8,480.9 1048,497.7 1039.6,514.5 1038.4,536 1044.4,560.2 1054,584.2 1061.3,591.4 1080.5,603.5 1099.7,627.5 1116.5,649 1128.6,666 1139.4,682.8 1243.75,671.25 1260,647.5 1280,625 1315,587.5 1340,576.25 1360,571.25 1366.25,561.25 1366.25,543.75 1340,533.75 1315,522 1363.75,492 1345,472.5 1325,461.25 1296.25,449.5 1275,448 1252.5,450 1237.5,456.25 1226.25,470 1228.75,533.75 1193.5,536 1162.2,521.7 1104.5,490.5"/></clipPath><radialGradient id="twg" cx="0.45" cy="0.5" r="0.6"><stop offset="0" stop-color="#f2f2f2"/><stop offset="1" stop-color="#dcdcdc"/></radialGradient><pattern id="twd" x="0" y="0" width="4.6" height="4.6" patternUnits="userSpaceOnUse" patternTransform="rotate(25)"><rect x="0" y="0" width="2" height="2" fill="#8c8c8c"/></pattern></defs><rect x="954" y="377" width="467" height="350" fill="#111111"/><path d="M1412,377 H1421 V392 Q1414,390 1412,384 Z" fill="#3a3a3a"/><polygon points="1066,473.6 1058.8,480.9 1048,497.7 1039.6,514.5 1038.4,536 1044.4,560.2 1054,584.2 1061.3,591.4 1080.5,603.5 1099.7,627.5 1116.5,649 1128.6,666 1139.4,682.8 1243.75,671.25 1260,647.5 1280,625 1315,587.5 1340,576.25 1360,571.25 1366.25,561.25 1366.25,543.75 1340,533.75 1315,522 1363.75,492 1345,472.5 1325,461.25 1296.25,449.5 1275,448 1252.5,450 1237.5,456.25 1226.25,470 1228.75,533.75 1193.5,536 1162.2,521.7 1104.5,490.5" fill="url(#twg)"/><polygon points="1066,473.6 1058.8,480.9 1048,497.7 1039.6,514.5 1038.4,536 1044.4,560.2 1054,584.2 1061.3,591.4 1080.5,603.5 1099.7,627.5 1116.5,649 1128.6,666 1139.4,682.8 1243.75,671.25 1260,647.5 1280,625 1315,587.5 1340,576.25 1360,571.25 1366.25,561.25 1366.25,543.75 1340,533.75 1315,522 1363.75,492 1345,472.5 1325,461.25 1296.25,449.5 1275,448 1252.5,450 1237.5,456.25 1226.25,470 1228.75,533.75 1193.5,536 1162.2,521.7 1104.5,490.5" fill="url(#twd)" opacity="0.28"/><g clip-path="url(#tw)" fill="none" stroke="#909090" stroke-width="1.8" stroke-dasharray="1.8 2.8"><circle cx="1040" cy="525" r="4.6"/><circle cx="1040" cy="525" r="9.2"/><circle cx="1040" cy="525" r="13.8"/><circle cx="1040" cy="525" r="18.4"/><circle cx="1040" cy="525" r="23.0"/><circle cx="1040" cy="525" r="27.6"/><circle cx="1040" cy="525" r="32.2"/><circle cx="1040" cy="525" r="36.8"/><circle cx="1040" cy="525" r="41.4"/><circle cx="1118" cy="548" r="4.6"/><circle cx="1118" cy="548" r="9.2"/><circle cx="1118" cy="548" r="13.8"/><circle cx="1118" cy="548" r="18.4"/><circle cx="1118" cy="548" r="23.0"/><circle cx="1118" cy="548" r="27.6"/><circle cx="1197" cy="562" r="4.6"/><circle cx="1197" cy="562" r="9.2"/><circle cx="1197" cy="562" r="13.8"/><circle cx="1197" cy="562" r="18.4"/><circle cx="1197" cy="562" r="23.0"/><circle cx="1197" cy="562" r="27.6"/><circle cx="1228" cy="650" r="4.6"/><circle cx="1228" cy="650" r="9.2"/><circle cx="1228" cy="650" r="13.8"/><circle cx="1228" cy="650" r="18.4"/><circle cx="1228" cy="650" r="23.0"/><circle cx="1228" cy="650" r="27.6"/><circle cx="1228" cy="650" r="32.2"/><circle cx="1228" cy="650" r="36.8"/><circle cx="1250" cy="490" r="4.6"/><circle cx="1250" cy="490" r="9.2"/><circle cx="1250" cy="490" r="13.8"/><circle cx="1250" cy="490" r="18.4"/><circle cx="1250" cy="490" r="23.0"/><circle cx="1250" cy="490" r="27.6"/><circle cx="1250" cy="490" r="32.2"/><circle cx="1322" cy="522" r="4.6"/><circle cx="1322" cy="522" r="9.2"/><circle cx="1322" cy="522" r="13.8"/><circle cx="1322" cy="522" r="18.4"/><circle cx="1322" cy="522" r="23.0"/><circle cx="1322" cy="522" r="27.6"/><circle cx="1362" cy="552" r="4.6"/><circle cx="1362" cy="552" r="9.2"/><circle cx="1362" cy="552" r="13.8"/><circle cx="1160" cy="615" r="4.6"/><circle cx="1160" cy="615" r="9.2"/><circle cx="1160" cy="615" r="13.8"/><circle cx="1160" cy="615" r="18.4"/><circle cx="1160" cy="615" r="23.0"/><circle cx="1085" cy="605" r="4.6"/><circle cx="1085" cy="605" r="9.2"/><circle cx="1085" cy="605" r="13.8"/><circle cx="1085" cy="605" r="18.4"/><circle cx="1085" cy="605" r="23.0"/><circle cx="1292" cy="612" r="4.6"/><circle cx="1292" cy="612" r="9.2"/><circle cx="1292" cy="612" r="13.8"/><circle cx="1292" cy="612" r="18.4"/><circle cx="1292" cy="612" r="23.0"/><circle cx="1150" cy="505" r="4.6"/><circle cx="1150" cy="505" r="9.2"/><circle cx="1150" cy="505" r="13.8"/><circle cx="1150" cy="505" r="18.4"/><circle cx="1275" cy="550" r="4.6"/><circle cx="1275" cy="550" r="9.2"/><circle cx="1275" cy="550" r="13.8"/><circle cx="1305" cy="468" r="4.6"/><circle cx="1305" cy="468" r="9.2"/><circle cx="1305" cy="468" r="13.8"/><circle cx="1305" cy="468" r="18.4"/><circle cx="1110" cy="655" r="4.6"/><circle cx="1110" cy="655" r="9.2"/><circle cx="1110" cy="655" r="13.8"/><circle cx="1190" cy="665" r="4.6"/><circle cx="1190" cy="665" r="9.2"/><circle cx="1190" cy="665" r="13.8"/></g><polygon points="1066,473.6 1058.8,480.9 1048,497.7 1039.6,514.5 1038.4,536 1044.4,560.2 1054,584.2 1061.3,591.4 1080.5,603.5 1099.7,627.5 1116.5,649 1128.6,666 1139.4,682.8 1243.75,671.25 1260,647.5 1280,625 1315,587.5 1340,576.25 1360,571.25 1366.25,561.25 1366.25,543.75 1340,533.75 1315,522 1363.75,492 1345,472.5 1325,461.25 1296.25,449.5 1275,448 1252.5,450 1237.5,456.25 1226.25,470 1228.75,533.75 1193.5,536 1162.2,521.7 1104.5,490.5" fill="none" stroke="#22ee22" stroke-width="1"/><path d="M1290,564 V492 H1361" fill="none" stroke="#00ff00" stroke-width="3"/><path d="M1355,487.5 L1363,492 L1355,496.5 M1284,560 L1290,566 L1296,560" fill="none" stroke="#00ff00" stroke-width="3"/><path d="M1370.5,484 L1378.5,492.5 M1378.5,484 L1370.5,492.5 M1286.5,570.5 L1289.5,574.5 L1292.5,570.5 M1289.5,574.5 V578.5" fill="none" stroke="#1fd0ff" stroke-width="1"/></svg>
<div class="a" style="left:948px;top:158px;width:6px;height:854px;background:#d9d9d9;"></div>
<div class="a" style="left:0px;top:158px;width:1px;height:854px;background:#d9d9d9;"></div>
<div class="a" style="left:0px;top:942px;width:1920px;height:6px;background:#e6e6e6;"></div>
<svg class="a" style="left:469px;top:942px;" width="20" height="7" viewBox="0 0 20 7"><circle cx="3.5" cy="3" r="1.5" fill="#6a6a6a"/><circle cx="9.5" cy="3" r="1.5" fill="#6a6a6a"/><circle cx="15.5" cy="3" r="1.5" fill="#6a6a6a"/></svg>
<svg class="a" style="left:1433px;top:942px;" width="20" height="7" viewBox="0 0 20 7"><circle cx="3" cy="3" r="1.5" fill="#6a6a6a"/><circle cx="9" cy="3" r="1.5" fill="#6a6a6a"/><circle cx="15" cy="3" r="1.5" fill="#6a6a6a"/></svg>
<div class="a" style="left:0px;top:1012px;width:1920px;height:1px;background:#ffffff;"></div>
<div class="a" style="left:0px;top:1013px;width:1920px;height:27px;background:#f0f0f0;"></div>
<div class="t" style="left:21.50px;top:1022.19px;font-size:12.5px;line-height:13.963px;color:#000;transform:scaleX(0.9872);">Administrator</div>
<div class="a" style="left:1px;top:948px;width:847px;height:64px;background:#808080;"></div>
<svg class="a" style="left:6px;top:953px;" width="836" height="54" viewBox="0 0 836 54"><defs><pattern id="fd1" x="0" y="0" width="10" height="51" patternUnits="userSpaceOnUse"><rect x="0" y="0" width="4" height="3" fill="#ffffff"/><rect x="0" y="51" width="4" height="3" fill="#ffffff"/></pattern></defs><rect x="0" y="0" width="836" height="3" fill="url(#fd1)"/><rect x="0" y="51" width="836" height="3" fill="url(#fd1)"/></svg>
<div class="a" style="left:6px;top:958px;width:44px;height:44px;background:#3d9535;"></div>
<svg class="a" style="left:11px;top:963px;" width="34" height="34" viewBox="0 0 34 34"><rect width="34" height="34" fill="#22140a"/><rect x="2.5" y="3" width="29" height="27" fill="#1a0f07"/><path d="M2.5,3.3 H31.5" stroke="#b89a6a" stroke-width="0.9"/><path d="M2.5,29.7 H31.5" stroke="#8a7a58" stroke-width="0.9"/><rect x="3.6" y="4.5" width="4.8" height="8.5" fill="#1a3444"/><rect x="3.6" y="13" width="4.8" height="6" fill="#a4a876"/><rect x="3.6" y="19" width="4.8" height="9.5" fill="#1e3434"/><rect x="9.3" y="4.5" width="4.8" height="8.5" fill="#1c441c"/><rect x="9.3" y="13" width="4.8" height="6" fill="#a4a876"/><rect x="9.3" y="19" width="4.8" height="9.5" fill="#1e4422"/><rect x="15.0" y="4.5" width="4.8" height="8.5" fill="#c4b02a"/><rect x="15.0" y="13" width="4.8" height="6" fill="#a4a876"/><rect x="15.0" y="19" width="4.8" height="9.5" fill="#a09226"/><rect x="20.7" y="4.5" width="4.8" height="8.5" fill="#a83c14"/><rect x="20.7" y="13" width="4.8" height="6" fill="#a4a876"/><rect x="20.7" y="19" width="4.8" height="9.5" fill="#8a3a18"/><rect x="26.4" y="4.5" width="4.8" height="8.5" fill="#7a1c10"/><rect x="26.4" y="13" width="4.8" height="6" fill="#a4a876"/><rect x="26.4" y="19" width="4.8" height="9.5" fill="#6a2418"/></svg>
<div class="a" style="left:55px;top:958px;width:44px;height:44px;background:#369a2e;"></div>
<svg class="a" style="left:60px;top:963px;" width="34" height="34" viewBox="0 0 34 34"><rect width="34" height="34" fill="#22140a"/><rect x="2.5" y="3" width="29" height="27" fill="#1a0f07"/><path d="M2.5,3.3 H31.5" stroke="#b89a6a" stroke-width="0.9"/><path d="M2.5,29.7 H31.5" stroke="#8a7a58" stroke-width="0.9"/><rect x="3.6" y="4.5" width="4.8" height="8.5" fill="#1a3444"/><rect x="3.6" y="13" width="4.8" height="6" fill="#a4a876"/><rect x="3.6" y="19" width="4.8" height="9.5" fill="#1e3434"/><rect x="9.3" y="4.5" width="4.8" height="8.5" fill="#1c441c"/><rect x="9.3" y="13" width="4.8" height="6" fill="#a4a876"/><rect x="9.3" y="19" width="4.8" height="9.5" fill="#1e4422"/><rect x="15.0" y="4.5" width="4.8" height="8.5" fill="#c4b02a"/><rect x="15.0" y="13" width="4.8" height="6" fill="#a4a876"/><rect x="15.0" y="19" width="4.8" height="9.5" fill="#a09226"/><rect x="20.7" y="4.5" width="4.8" height="8.5" fill="#a83c14"/><rect x="20.7" y="13" width="4.8" height="6" fill="#a4a876"/><rect x="20.7" y="19" width="4.8" height="9.5" fill="#8a3a18"/><rect x="26.4" y="4.5" width="4.8" height="8.5" fill="#7a1c10"/><rect x="26.4" y="13" width="4.8" height="6" fill="#a4a876"/><rect x="26.4" y="19" width="4.8" height="9.5" fill="#6a2418"/></svg>
<div class="a" style="left:104px;top:958px;width:44px;height:44px;background:#26a020;"></div>
<svg class="a" style="left:109px;top:963px;" width="34" height="34" viewBox="0 0 34 34"><rect width="34" height="34" fill="#22140a"/><rect x="2.5" y="3" width="29" height="27" fill="#1a0f07"/><path d="M2.5,3.3 H31.5" stroke="#b89a6a" stroke-width="0.9"/><path d="M2.5,29.7 H31.5" stroke="#8a7a58" stroke-width="0.9"/><rect x="3.6" y="4.5" width="4.8" height="8.5" fill="#1a3444"/><rect x="3.6" y="13" width="4.8" height="6" fill="#a4a876"/><rect x="3.6" y="19" width="4.8" height="9.5" fill="#1e3434"/><rect x="9.3" y="4.5" width="4.8" height="8.5" fill="#1c441c"/><rect x="9.3" y="13" width="4.8" height="6" fill="#a4a876"/><rect x="9.3" y="19" width="4.8" height="9.5" fill="#1e4422"/><rect x="15.0" y="4.5" width="4.8" height="8.5" fill="#c4b02a"/><rect x="15.0" y="13" width="4.8" height="6" fill="#a4a876"/><rect x="15.0" y="19" width="4.8" height="9.5" fill="#a09226"/><rect x="20.7" y="4.5" width="4.8" height="8.5" fill="#a83c14"/><rect x="20.7" y="13" width="4.8" height="6" fill="#a4a876"/><rect x="20.7" y="19" width="4.8" height="9.5" fill="#8a3a18"/><rect x="26.4" y="4.5" width="4.8" height="8.5" fill="#7a1c10"/><rect x="26.4" y="13" width="4.8" height="6" fill="#a4a876"/><rect x="26.4" y="19" width="4.8" height="9.5" fill="#6a2418"/></svg>
<div class="a" style="left:153px;top:958px;width:44px;height:44px;background:#0e9a0e;"></div>
<svg class="a" style="left:158px;top:963px;" width="34" height="34" viewBox="0 0 34 34"><rect width="34" height="34" fill="#22140a"/><rect x="2.5" y="3" width="29" height="27" fill="#1a0f07"/><path d="M2.5,3.3 H31.5" stroke="#b89a6a" stroke-width="0.9"/><path d="M2.5,29.7 H31.5" stroke="#8a7a58" stroke-width="0.9"/><rect x="3.6" y="4.5" width="4.8" height="8.5" fill="#1a3444"/><rect x="3.6" y="13" width="4.8" height="6" fill="#a4a876"/><rect x="3.6" y="19" width="4.8" height="9.5" fill="#1e3434"/><rect x="9.3" y="4.5" width="4.8" height="8.5" fill="#1c441c"/><rect x="9.3" y="13" width="4.8" height="6" fill="#a4a876"/><rect x="9.3" y="19" width="4.8" height="9.5" fill="#1e4422"/><rect x="15.0" y="4.5" width="4.8" height="8.5" fill="#c4b02a"/><rect x="15.0" y="13" width="4.8" height="6" fill="#a4a876"/><rect x="15.0" y="19" width="4.8" height="9.5" fill="#a09226"/><rect x="20.7" y="4.5" width="4.8" height="8.5" fill="#a83c14"/><rect x="20.7" y="13" width="4.8" height="6" fill="#a4a876"/><rect x="20.7" y="19" width="4.8" height="9.5" fill="#8a3a18"/><rect x="26.4" y="4.5" width="4.8" height="8.5" fill="#7a1c10"/><rect x="26.4" y="13" width="4.8" height="6" fill="#a4a876"/><rect x="26.4" y="19" width="4.8" height="9.5" fill="#6a2418"/></svg>
<div class="a" style="left:202px;top:958px;width:44px;height:44px;background:#3a9a30;"></div>
<svg class="a" style="left:207px;top:963px;" width="34" height="34" viewBox="0 0 34 34"><rect width="34" height="34" fill="#22140a"/><rect x="2.5" y="3" width="29" height="27" fill="#1a0f07"/><path d="M2.5,3.3 H31.5" stroke="#b89a6a" stroke-width="0.9"/><path d="M2.5,29.7 H31.5" stroke="#8a7a58" stroke-width="0.9"/><rect x="3.6" y="4.5" width="4.8" height="8.5" fill="#1a3444"/><rect x="3.6" y="13" width="4.8" height="6" fill="#a4a876"/><rect x="3.6" y="19" width="4.8" height="9.5" fill="#1e3434"/><rect x="9.3" y="4.5" width="4.8" height="8.5" fill="#1c441c"/><rect x="9.3" y="13" width="4.8" height="6" fill="#a4a876"/><rect x="9.3" y="19" width="4.8" height="9.5" fill="#1e4422"/><rect x="15.0" y="4.5" width="4.8" height="8.5" fill="#c4b02a"/><rect x="15.0" y="13" width="4.8" height="6" fill="#a4a876"/><rect x="15.0" y="19" width="4.8" height="9.5" fill="#a09226"/><rect x="20.7" y="4.5" width="4.8" height="8.5" fill="#a83c14"/><rect x="20.7" y="13" width="4.8" height="6" fill="#a4a876"/><rect x="20.7" y="19" width="4.8" height="9.5" fill="#8a3a18"/><rect x="26.4" y="4.5" width="4.8" height="8.5" fill="#7a1c10"/><rect x="26.4" y="13" width="4.8" height="6" fill="#a4a876"/><rect x="26.4" y="19" width="4.8" height="9.5" fill="#6a2418"/></svg>
<div class="a" style="left:251px;top:958px;width:44px;height:44px;background:#3b9833;"></div>
<svg class="a" style="left:256px;top:963px;" width="34" height="34" viewBox="0 0 34 34"><rect width="34" height="34" fill="#22140a"/><rect x="2.5" y="3" width="29" height="27" fill="#1a0f07"/><path d="M2.5,3.3 H31.5" stroke="#b89a6a" stroke-width="0.9"/><path d="M2.5,29.7 H31.5" stroke="#8a7a58" stroke-width="0.9"/><rect x="3.6" y="4.5" width="4.8" height="8.5" fill="#1a3444"/><rect x="3.6" y="13" width="4.8" height="6" fill="#a4a876"/><rect x="3.6" y="19" width="4.8" height="9.5" fill="#1e3434"/><rect x="9.3" y="4.5" width="4.8" height="8.5" fill="#1c441c"/><rect x="9.3" y="13" width="4.8" height="6" fill="#a4a876"/><rect x="9.3" y="19" width="4.8" height="9.5" fill="#1e4422"/><rect x="15.0" y="4.5" width="4.8" height="8.5" fill="#c4b02a"/><rect x="15.0" y="13" width="4.8" height="6" fill="#a4a876"/><rect x="15.0" y="19" width="4.8" height="9.5" fill="#a09226"/><rect x="20.7" y="4.5" width="4.8" height="8.5" fill="#a83c14"/><rect x="20.7" y="13" width="4.8" height="6" fill="#a4a876"/><rect x="20.7" y="19" width="4.8" height="9.5" fill="#8a3a18"/><rect x="26.4" y="4.5" width="4.8" height="8.5" fill="#7a1c10"/><rect x="26.4" y="13" width="4.8" height="6" fill="#a4a876"/><rect x="26.4" y="19" width="4.8" height="9.5" fill="#6a2418"/></svg>
<div class="a" style="left:300px;top:958px;width:44px;height:44px;background:#3a9632;"></div>
<svg class="a" style="left:305px;top:963px;" width="34" height="34" viewBox="0 0 34 34"><rect width="34" height="34" fill="#22140a"/><rect x="2.5" y="3" width="29" height="27" fill="#1a0f07"/><path d="M2.5,3.3 H31.5" stroke="#b89a6a" stroke-width="0.9"/><path d="M2.5,29.7 H31.5" stroke="#8a7a58" stroke-width="0.9"/><rect x="3.6" y="4.5" width="4.8" height="8.5" fill="#1a3444"/><rect x="3.6" y="13" width="4.8" height="6" fill="#a4a876"/><rect x="3.6" y="19" width="4.8" height="9.5" fill="#1e3434"/><rect x="9.3" y="4.5" width="4.8" height="8.5" fill="#1c441c"/><rect x="9.3" y="13" width="4.8" height="6" fill="#a4a876"/><rect x="9.3" y="19" width="4.8" height="9.5" fill="#1e4422"/><rect x="15.0" y="4.5" width="4.8" height="8.5" fill="#c4b02a"/><rect x="15.0" y="13" width="4.8" height="6" fill="#a4a876"/><rect x="15.0" y="19" width="4.8" height="9.5" fill="#a09226"/><rect x="20.7" y="4.5" width="4.8" height="8.5" fill="#a83c14"/><rect x="20.7" y="13" width="4.8" height="6" fill="#a4a876"/><rect x="20.7" y="19" width="4.8" height="9.5" fill="#8a3a18"/><rect x="26.4" y="4.5" width="4.8" height="8.5" fill="#7a1c10"/><rect x="26.4" y="13" width="4.8" height="6" fill="#a4a876"/><rect x="26.4" y="19" width="4.8" height="9.5" fill="#6a2418"/></svg>
<div class="a" style="left:954px;top:948px;width:868px;height:64px;background:#808080;"></div>
<svg class="a" style="left:959px;top:953px;" width="863" height="54" viewBox="0 0 863 54"><defs><pattern id="fd2" x="0" y="0" width="10" height="51" patternUnits="userSpaceOnUse"><rect x="0" y="0" width="4" height="3" fill="#ffffff"/><rect x="0" y="51" width="4" height="3" fill="#ffffff"/></pattern></defs><rect x="0" y="0" width="863" height="3" fill="url(#fd2)"/><rect x="0" y="51" width="863" height="3" fill="url(#fd2)"/></svg>
<div class="a" style="left:959px;top:958px;width:44px;height:44px;background:#0c8c0c;"></div>
<svg class="a" style="left:964px;top:963px;" width="34" height="34" viewBox="0 0 34 34"><rect width="34" height="34" fill="#101010"/><path d="M4,13 Q5,10.5 7,10 L16,15 L21,15.5 L21,8 Q24,5.5 28,7 L31,10 L27,13 L31,15.5 L30,18.5 L24,20.5 L18,29.5 L10,30.5 L6,24 L4,18 Z" fill="#d6d6d6"/></svg>
<div class="a" style="left:1008px;top:958px;width:44px;height:44px;background:#24991e;"></div>
<svg class="a" style="left:1013px;top:963px;" width="34" height="34" viewBox="0 0 34 34"><rect width="34" height="34" fill="#101010"/><path d="M4,13 Q5,10.5 7,10 L16,15 L21,15.5 L21,8 Q24,5.5 28,7 L31,10 L27,13 L31,15.5 L30,18.5 L24,20.5 L18,29.5 L10,30.5 L6,24 L4,18 Z" fill="#d6d6d6"/></svg>
<div class="a" style="left:1057px;top:958px;width:44px;height:44px;background:#2f9527;"></div>
<svg class="a" style="left:1062px;top:963px;" width="34" height="34" viewBox="0 0 34 34"><rect width="34" height="34" fill="#101010"/><path d="M4,13 Q5,10.5 7,10 L16,15 L21,15.5 L21,8 Q24,5.5 28,7 L31,10 L27,13 L31,15.5 L30,18.5 L24,20.5 L18,29.5 L10,30.5 L6,24 L4,18 Z" fill="#d6d6d6"/></svg>
<div class="a" style="left:1106px;top:958px;width:44px;height:44px;background:#3a8c34;"></div>
<svg class="a" style="left:1111px;top:963px;" width="34" height="34" viewBox="0 0 34 34"><rect width="34" height="34" fill="#101010"/><path d="M4,13 Q5,10.5 7,10 L16,15 L21,15.5 L21,8 Q24,5.5 28,7 L31,10 L27,13 L31,15.5 L30,18.5 L24,20.5 L18,29.5 L10,30.5 L6,24 L4,18 Z" fill="#d6d6d6"/></svg>
<div class="a" style="left:1155px;top:958px;width:44px;height:44px;background:#d0433a;"></div>
<svg class="a" style="left:1160px;top:963px;" width="34" height="34" viewBox="0 0 34 34"><rect width="34" height="34" fill="#101010"/><path d="M4,13 Q5,10.5 7,10 L16,15 L21,15.5 L21,8 Q24,5.5 28,7 L31,10 L27,13 L31,15.5 L30,18.5 L24,20.5 L18,29.5 L10,30.5 L6,24 L4,18 Z" fill="#d6d6d6"/></svg>
<div class="a" style="left:1204px;top:958px;width:44px;height:44px;background:#3a9232;"></div>
<svg class="a" style="left:1209px;top:963px;" width="34" height="34" viewBox="0 0 34 34"><rect width="34" height="34" fill="#101010"/><path d="M4,13 Q5,10.5 7,10 L16,15 L21,15.5 L21,8 Q24,5.5 28,7 L31,10 L27,13 L31,15.5 L30,18.5 L24,20.5 L18,29.5 L10,30.5 L6,24 L4,18 Z" fill="#d6d6d6"/></svg>
<div class="a" style="left:848px;top:948px;width:100px;height:64px;background:#fbfbfb;"></div>
<div class="a" style="left:849.5px;top:949px;width:47px;height:30px;box-sizing:border-box;border:1px solid #e4e4e4;border-radius:4px;background:#f0f0f0;"></div>
<div class="a" style="left:899px;top:949px;width:47px;height:30px;box-sizing:border-box;border:1px solid #e4e4e4;border-radius:4px;background:#f0f0f0;"></div>
<div class="a" style="left:849.5px;top:981px;width:47px;height:30px;box-sizing:border-box;border:1px solid #e4e4e4;border-radius:4px;background:#f0f0f0;"></div>
<div class="a" style="left:899px;top:981px;width:47.5px;height:30px;box-sizing:border-box;border:1px solid #c4c4c4;border-radius:4px;background:#f0f0f0;box-shadow:inset 0 0 0 2px #ffffff;"></div>
<svg class="a" style="left:848px;top:948px;" width="100" height="64" viewBox="0 0 100 64"><path d="M30,8 L21.5,16 L30,24" fill="none" stroke="#6e6e6e" stroke-width="2.2"/><path d="M71,8 L79.5,16 L71,24" fill="none" stroke="#6e6e6e" stroke-width="2.2"/><path d="M18.5,41.5 Q18.5,40 20,40.8 L30.5,47.2 Q32,48.2 30.5,49.2 L20,55.5 Q18.5,56.3 18.5,54.8 Z" fill="none" stroke="#3a3a3a" stroke-width="0.9"/><rect x="68.8" y="42.2" width="13" height="3" rx="1" fill="#c6c6c6"/><path d="M72.8,42.5 V40.8 H77.8 V42.5" fill="none" stroke="#c6c6c6" stroke-width="1.2"/><path d="M70,45.5 H80.5 V56.3 H70 Z" fill="#dadada"/><path d="M71.6,46 V56 M74,46 V56 M76.5,46 V56 M78.9,46 V56" fill="none" stroke="#bdbdbd" stroke-width="1.5"/></svg>
<div class="a" style="left:1822px;top:948px;width:100px;height:64px;background:#fbfbfb;"></div>
<div class="a" style="left:1823.5px;top:949px;width:47px;height:30px;box-sizing:border-box;border:1px solid #e4e4e4;border-radius:4px;background:#f0f0f0;"></div>
<div class="a" style="left:1873px;top:949px;width:47px;height:30px;box-sizing:border-box;border:1px solid #e4e4e4;border-radius:4px;background:#f0f0f0;"></div>
<div class="a" style="left:1823.5px;top:981px;width:47px;height:30px;box-sizing:border-box;border:1px solid #e4e4e4;border-radius:4px;background:#f0f0f0;"></div>
<div class="a" style="left:1873px;top:981px;width:47.5px;height:30px;box-sizing:border-box;border:1px solid #c4c4c4;border-radius:4px;background:#f0f0f0;box-shadow:inset 0 0 0 2px #ffffff;"></div>
<svg class="a" style="left:1822px;top:948px;" width="100" height="64" viewBox="0 0 100 64"><path d="M30,8 L21.5,16 L30,24" fill="none" stroke="#6e6e6e" stroke-width="2.2"/><path d="M71,8 L79.5,16 L71,24" fill="none" stroke="#6e6e6e" stroke-width="2.2"/><path d="M18.5,41.5 Q18.5,40 20,40.8 L30.5,47.2 Q32,48.2 30.5,49.2 L20,55.5 Q18.5,56.3 18.5,54.8 Z" fill="none" stroke="#3a3a3a" stroke-width="0.9"/><rect x="68.8" y="42.2" width="13" height="3" rx="1" fill="#c6c6c6"/><path d="M72.8,42.5 V40.8 H77.8 V42.5" fill="none" stroke="#c6c6c6" stroke-width="1.2"/><path d="M70,45.5 H80.5 V56.3 H70 Z" fill="#dadada"/><path d="M71.6,46 V56 M74,46 V56 M76.5,46 V56 M78.9,46 V56" fill="none" stroke="#bdbdbd" stroke-width="1.5"/></svg>
<svg class="a" style="left:0px;top:1016px;" width="400" height="24" viewBox="0 0 400 24"><circle cx="10" cy="7.6" r="3.6" fill="none" stroke="#1a1a1a" stroke-width="1.2"/><path d="M11.5,12.2 Q5.5,12.4 3,18.5 Q2.8,19.5 4,19.5 H7.5 M8.5,17.3 L9.3,16.4 H13.8 M9.3,18.5 H11.8" fill="none" stroke="#1a1a1a" stroke-width="1.2"/><rect x="13.8" y="15" width="3.9" height="4.8" rx="1.1" fill="none" stroke="#1a1a1a" stroke-width="1.2"/><rect x="203" y="9.5" width="14.5" height="5" fill="none" stroke="#1a1a1a" stroke-width="1.5"/><path d="M205,12 H215.5" stroke="#1a1a1a" stroke-width="1"/><rect x="321.5" y="4.5" width="5" height="4.5" fill="none" stroke="#1a1a1a" stroke-width="1"/><path d="M324,9 V12 M316.5,12 H331.5 M319,12 V14 M329,12 V14" fill="none" stroke="#1a1a1a" stroke-width="1"/><rect x="316.5" y="14.5" width="5" height="5" fill="none" stroke="#1a1a1a" stroke-width="1"/><rect x="326.5" y="14.5" width="5" height="5" fill="none" stroke="#1a1a1a" stroke-width="1"/><path d="M358,9.5 Q358,7.5 360,7.5 H362 L363.5,5 H368 L369.5,7.5 H371.5 Q373.5,7.5 373.5,9.5 V17.5 Q373.5,19.5 371.5,19.5 H360 Q358,19.5 358,17.5 Z" fill="none" stroke="#1a1a1a" stroke-width="1.1"/><circle cx="365.7" cy="13.3" r="3.6" fill="none" stroke="#1a1a1a" stroke-width="1.1"/></svg>
<div class="a" style="left:1503px;top:954px;width:400px;height:20px;background:rgba(20,150,0,0.6);"></div>
<div class="a" style="left:1503px;top:1015px;width:400px;height:20px;background:rgba(20,150,0,0.6);"></div>
<div class="a" style="left:1503px;top:974px;width:23px;height:41px;background:rgba(20,150,0,0.6);"></div>
<div class="a" style="left:1567px;top:974px;width:336px;height:41px;background:rgba(20,150,0,0.6);"></div>
<div class="a" style="left:1526px;top:974px;width:41px;height:41px;background:rgba(255,255,255,0.6);"></div>
<svg class="a" style="left:1526px;top:974px;" width="41" height="41" viewBox="0 0 41 41"><path d="M10.5,20.5 L17.5,27.5 L33,12" fill="none" stroke="#3a9a34" stroke-width="3.4" stroke-linecap="round" stroke-linejoin="round"/></svg>
<div class="t" style="left:1587.88px;top:989.74px;font-size:13px;line-height:14.521px;color:#d2e2cc;transform:scaleX(1.0544);">Speichern: Ausführung erfolgreich</div>
<svg class="a" style="left:1867px;top:983px;" width="22" height="22" viewBox="0 0 22 22"><circle cx="11" cy="11" r="10.7" fill="#ffffff"/><path d="M6.3,6.3 L15.7,15.7 M15.7,6.3 L6.3,15.7" stroke="#5cb454" stroke-width="2"/></svg>
<div class="a" style="left:100px;top:1017px;width:100px;height:22px;background:#b0b0b0;"></div>
<div class="a" style="left:101px;top:1018px;width:98px;height:20px;background:#00aa22;"></div>
<div class="t" style="left:220.63px;top:1022.19px;font-size:12.5px;line-height:13.963px;color:#000;transform:scaleX(0.9263);">1250MB/4405MB</div>
<div class="t" style="left:335.00px;top:1022.19px;font-size:12.5px;line-height:13.963px;color:#000;transform:scaleX(0.8921);">OK</div>
<div class="t" style="left:376.45px;top:1022.19px;font-size:12.5px;line-height:13.963px;color:#000;transform:scaleX(0.8791);">2</div>
</body></html>
